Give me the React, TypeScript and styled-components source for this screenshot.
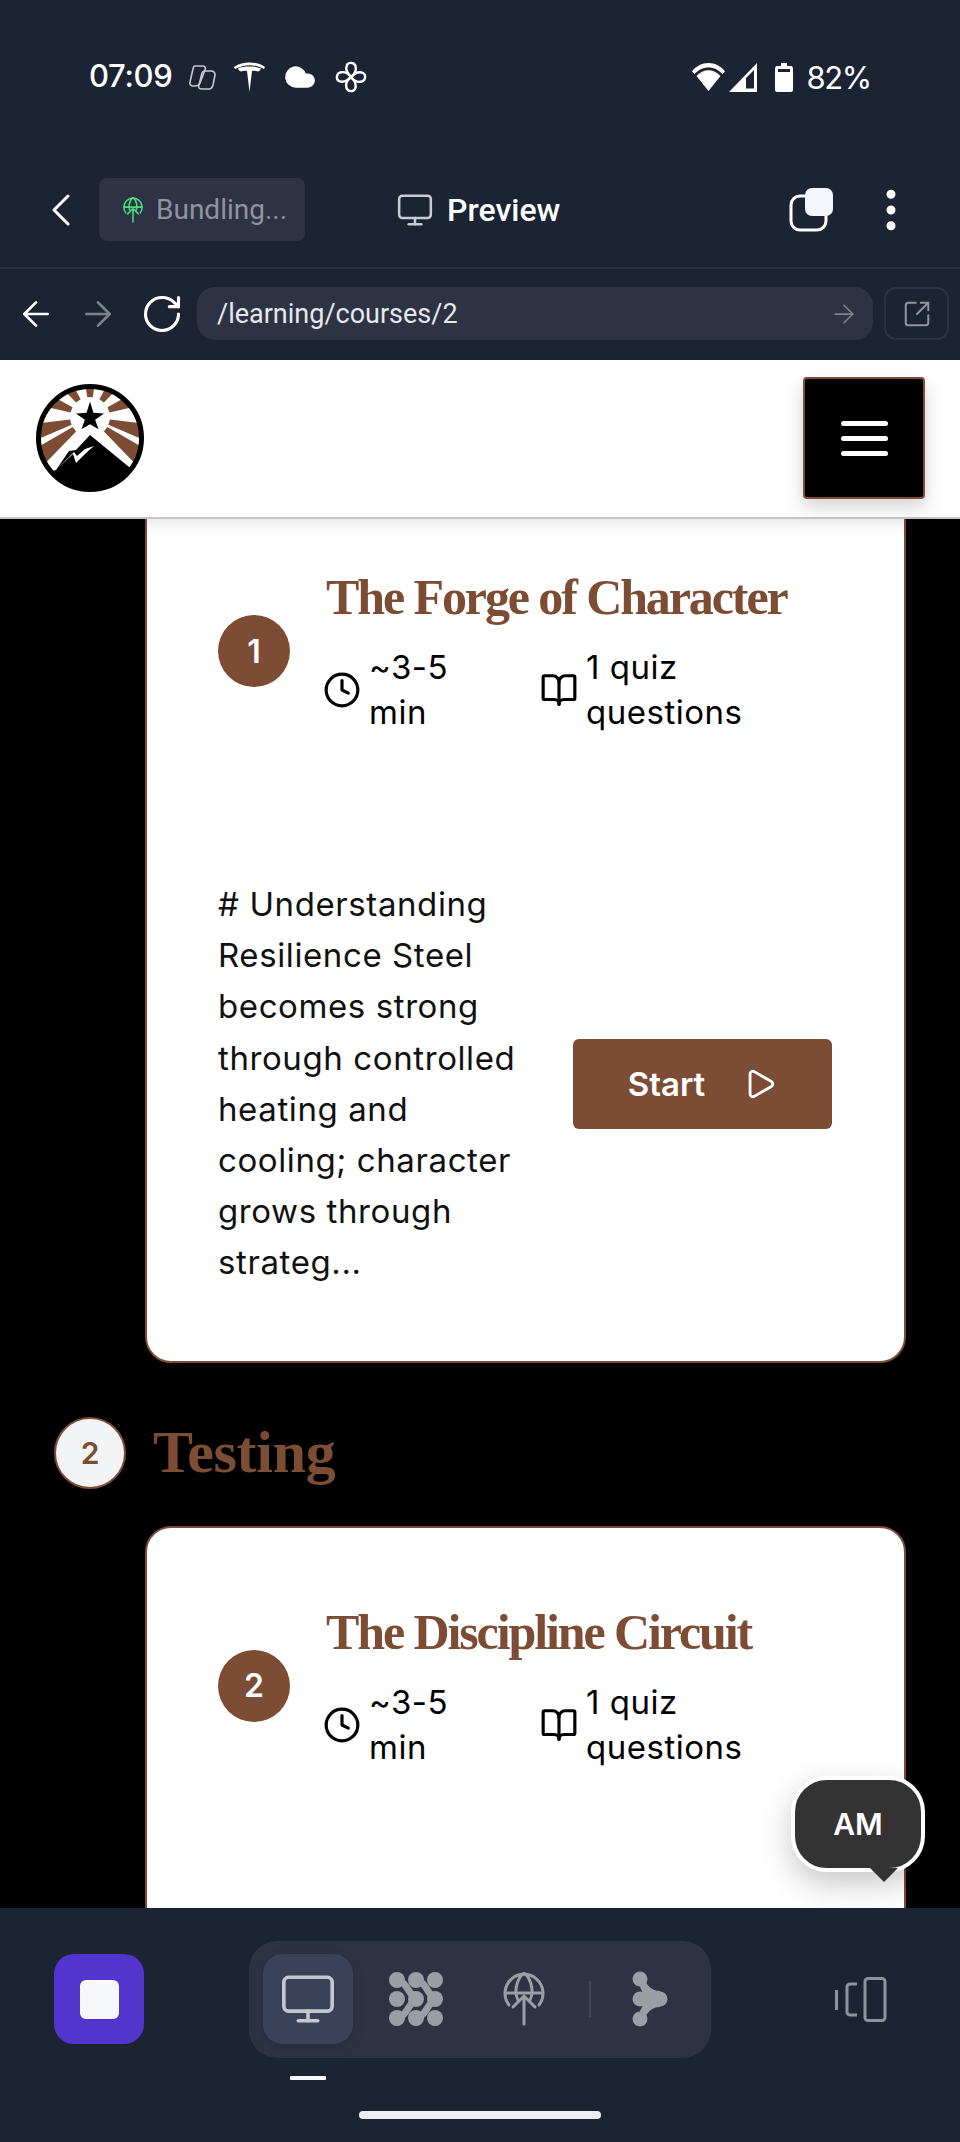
import React from 'react';
import styled, { createGlobalStyle } from 'styled-components';
import {
  ArrowLeft,
  ArrowRight,
  BookOpen,
  ChevronLeft,
  Clock,
  Cloud,
  EllipsisVertical,
  Monitor,
  Play,
  RotateCw,
  SquareArrowOutUpRight,
} from 'lucide-react';

const BROWN = '#7c4c35';
const CHROME = '#1c2333';
const CHROME_LIGHT = '#2d3245';
const UI_FONT = '"Roboto", "Open Sans", sans-serif';
const BODY_FONT = '"Inter", "Open Sans", sans-serif';
const DISPLAY_FONT = '"Liberation Serif", serif';

const GlobalStyle = createGlobalStyle`
  html, body {
    margin: 0;
    padding: 0;
    background: #000;
  }
`;

const Screen = styled.div`
  position: relative;
  width: 960px;
  height: 2142px;
  display: flex;
  flex-direction: column;
  overflow: hidden;
  background: #000;
`;

const TopChrome = styled.div`
  height: 360px;
  flex: none;
  background: ${CHROME};
  display: flex;
  flex-direction: column;
`;

const StatusBar = styled.div`
  height: 119px;
  padding: 60px 89px 0 89px;
  box-sizing: border-box;
  display: flex;
  align-items: flex-start;
  justify-content: space-between;
  color: #fff;
  font-family: ${BODY_FONT};
  font-size: 31px;
  font-weight: 500;
`;

const StatusGroup = styled.div`
  height: 34px;
  display: flex;
  align-items: center;
  gap: 18px;
`;

const StatusTime = styled.span`
  margin: -4px -3px 0 0;
  letter-spacing: -0.3px;
`;

const StatusRight = styled(StatusGroup)`
  gap: 4px;
`;

const BatterySlot = styled.span`
  margin-left: 13px;
  line-height: 0;
`;

const BatteryText = styled.span`
  margin-left: 9px;
  font-size: 31px;
  font-weight: 400;
  letter-spacing: -1.3px;
`;

const AppBar = styled.div`
  height: 150px;
  flex: none;
  box-sizing: border-box;
  padding: 60px 42px 27px 33px;
  border-bottom: 2px solid #2a3042;
  display: flex;
  align-items: center;
  color: #fff;
`;

const BundlePill = styled.div`
  width: 206px;
  height: 63px;
  margin-left: 10px;
  padding-left: 21px;
  box-sizing: border-box;
  border-radius: 8px;
  background: ${CHROME_LIGHT};
  display: flex;
  align-items: center;
  gap: 10px;
  color: #8f949f;
  font-family: ${UI_FONT};
  font-size: 28px;
`;

const PreviewTitle = styled.div`
  margin-left: 91px;
  display: flex;
  align-items: center;
  gap: 13px;
  font-family: ${UI_FONT};
  font-size: 32px;
  font-weight: 500;
  color: #c8cbd1;

  span {
    color: #fff;
  }
`;

const AppBarActions = styled.div`
  margin-left: auto;
  display: flex;
  align-items: center;
  gap: 31px;
`;

const UrlRow = styled.div`
  flex: 1;
  padding: 18px 11px 20px 16px;
  display: flex;
  align-items: stretch;
  gap: 11px;
`;

const UrlNav = styled.div`
  margin-right: 2px;
  display: flex;
  align-items: center;
  gap: 22px;
  color: #fff;
`;

const UrlField = styled.div`
  flex: 1;
  border-radius: 18px;
  background: ${CHROME_LIGHT};
  padding: 0 14px 0 20px;
  display: flex;
  align-items: center;
  justify-content: space-between;
  color: #e6e8ec;
  font-family: ${UI_FONT};
  font-size: 27px;
`;

const OpenButton = styled.div`
  width: 65px;
  box-sizing: border-box;
  border: 2px solid ${CHROME_LIGHT};
  border-radius: 12px;
  display: flex;
  align-items: center;
  justify-content: center;
  color: #9095a0;
`;

const SiteHeader = styled.header`
  position: relative;
  z-index: 2;
  height: 159px;
  flex: none;
  box-sizing: border-box;
  padding: 18px 35px 19px 36px;
  background: #fff;
  border-bottom: 2px solid #c4c4c4;
  box-shadow: 0 4px 14px rgba(0, 0, 0, 0.1);
  display: flex;
  align-items: center;
  justify-content: space-between;
`;

const MenuButton = styled.div`
  width: 122px;
  height: 122px;
  box-sizing: border-box;
  border: 2px solid ${BROWN};
  border-radius: 4px;
  background: #000;
  box-shadow: 0 8px 18px rgba(0, 0, 0, 0.18);
  display: flex;
  flex-direction: column;
  align-items: center;
  justify-content: center;
  gap: 10px;
`;

const MenuLine = styled.i`
  display: block;
  width: 47px;
  height: 5px;
  border-radius: 3px;
  background: #fff;
`;

const Content = styled.main`
  flex: 1;
  min-height: 0;
  overflow: hidden;
  background: #000;
`;

const Card = styled.section<{ $clipped?: boolean }>`
  width: 761px;
  min-height: 500px;
  box-sizing: border-box;
  margin: ${({ $clipped }) => ($clipped ? '-28px' : '0')} 0 0 145px;
  padding: 74px 50px 72px 71px;
  background: #fff;
  border: 2px solid ${BROWN};
  border-radius: 26px;
`;

const LessonHead = styled.div`
  display: flex;
  align-items: center;
  gap: 36px;
`;

const LessonNumber = styled.div`
  width: 72px;
  height: 72px;
  flex: none;
  border-radius: 50%;
  background: ${BROWN};
  color: #fff;
  display: flex;
  align-items: center;
  justify-content: center;
  font-family: ${BODY_FONT};
  font-size: 32px;
  font-weight: 600;
`;

const LessonInfo = styled.div`
  min-width: 0;
  flex: 1;
`;

const LessonTitle = styled.h3`
  margin: 0 0 18px;
  height: 60px;
  line-height: 60px;
  font-family: ${DISPLAY_FONT};
  font-size: 50px;
  font-weight: 700;
  letter-spacing: -2.1px;
  white-space: nowrap;
  color: ${BROWN};
`;

const MetaRow = styled.div`
  display: flex;
  margin-left: -3px;
`;

const MetaItem = styled.div`
  width: 217px;
  display: flex;
  align-items: center;
  gap: 8px;
  color: #000;
`;

const MetaText = styled.div<{ $width: number }>`
  width: ${({ $width }) => $width}px;
  font-family: ${BODY_FONT};
  font-size: 33px;
  line-height: 45px;
  letter-spacing: 0.5px;
  color: #000;
`;

const LessonBody = styled.div`
  margin-top: 144px;
  display: flex;
  align-items: center;
  gap: 47px;
`;

const Excerpt = styled.p`
  width: 308px;
  flex: none;
  margin: 0;
  font-family: ${BODY_FONT};
  font-size: 33px;
  line-height: 51.2px;
  letter-spacing: 0.6px;
  color: #111;
`;

const StartButton = styled.div`
  width: 259px;
  height: 90px;
  border-radius: 6px;
  background: ${BROWN};
  color: #fff;
  display: flex;
  align-items: center;
  justify-content: center;
  gap: 38px;
  font-family: ${BODY_FONT};
  font-size: 33px;
  font-weight: 600;
`;

const SectionHead = styled.div`
  height: 163px;
  padding: 17px 0 0 54px;
  box-sizing: border-box;
  display: flex;
  align-items: center;
  gap: 27px;
`;

const SectionNumber = styled.div`
  width: 72px;
  height: 72px;
  box-sizing: border-box;
  border: 2px solid ${BROWN};
  border-radius: 50%;
  background: #f3f4f6;
  color: ${BROWN};
  display: flex;
  align-items: center;
  justify-content: center;
  font-family: ${BODY_FONT};
  font-size: 30px;
  font-weight: 600;
`;

const SectionTitle = styled.h2`
  margin: 0;
  font-family: ${DISPLAY_FONT};
  font-size: 60px;
  font-weight: 700;
  letter-spacing: -0.3px;
  color: ${BROWN};
`;

const AccountBubble = styled.div`
  position: absolute;
  z-index: 3;
  left: 791px;
  top: 1776px;
  width: 134px;
  height: 96px;
  box-sizing: border-box;
  border: 4px solid #fff;
  border-radius: 36px;
  background: #333;
  box-shadow: 0 12px 30px rgba(0, 0, 0, 0.22);
  color: #fff;
  display: flex;
  align-items: center;
  justify-content: center;
  font-family: ${BODY_FONT};
  font-size: 30px;
  font-weight: 600;

  &::after {
    content: '';
    position: absolute;
    left: 75px;
    top: 88px;
    border-left: 14px solid transparent;
    border-right: 14px solid transparent;
    border-top: 14px solid #333;
  }
`;

const BottomBar = styled.footer`
  position: relative;
  z-index: 4;
  height: 234px;
  flex: none;
  box-sizing: border-box;
  padding: 33px 54px 0 54px;
  background: ${CHROME};
  display: grid;
  grid-template-columns: 1fr auto 1fr;
  align-items: start;
`;

const StopButton = styled.div`
  width: 90px;
  height: 90px;
  margin-top: 13px;
  border-radius: 20px;
  background: #5235cc;
  display: flex;
  align-items: center;
  justify-content: center;

  &::before {
    content: '';
    width: 39px;
    height: 39px;
    border-radius: 6px;
    background: #f6f8fc;
  }
`;

const NavColumn = styled.div`
  display: flex;
  flex-direction: column;
  align-items: flex-start;
`;

const NavPill = styled.nav`
  width: 462px;
  height: 117px;
  box-sizing: border-box;
  padding: 13px 0 0 14px;
  border-radius: 28px;
  background: ${CHROME_LIGHT};
  display: flex;
  align-items: flex-start;
  gap: 18px;
  color: #9a9fa6;
`;

const NavItem = styled.div<{ $active?: boolean }>`
  width: 90px;
  height: 90px;
  flex: none;
  border-radius: 20px;
  background: ${({ $active }) => ($active ? '#3a4259' : 'transparent')};
  box-shadow: ${({ $active }) => ($active ? '0 4px 14px rgba(0, 0, 0, 0.12)' : 'none')};
  color: ${({ $active }) => ($active ? '#c4c7cd' : 'inherit')};
  display: flex;
  align-items: center;
  justify-content: center;
`;

const NavDivider = styled.div`
  width: 2px;
  height: 36px;
  margin: 27px -4px 0 2px;
  flex: none;
  background: #3f465b;
`;

const NavIndicator = styled.div`
  width: 36px;
  height: 4px;
  margin: 18px 0 0 41px;
  border-radius: 1px;
  background: #f6f8fc;
`;

const DeviceToggle = styled.div`
  justify-self: end;
  margin: 36px 19px 0 0;
  line-height: 0;
`;

const HomeBar = styled.div`
  position: absolute;
  left: 359px;
  top: 203px;
  width: 242px;
  height: 8px;
  border-radius: 4px;
  background: #eceef1;
`;

const rayPoint = (angle: number, radius: number) => {
  const a = (angle * Math.PI) / 180;
  return `${(54 + Math.sin(a) * radius).toFixed(1)},${(33 - Math.cos(a) * radius).toFixed(1)}`;
};

const RAY_ANGLES = [0, 36, -36, 69, -69, 105, -105, 128, -128];

const Logo = () => (
  <svg width="108" height="108" viewBox="0 0 108 108">
    <defs>
      <clipPath id="logo-clip">
        <circle cx="54" cy="54" r="51" />
      </clipPath>
    </defs>
    <circle cx="54" cy="54" r="51" fill="#fff" />
    <g clipPath="url(#logo-clip)">
      {RAY_ANGLES.map((angle) => (
        <polygon
          key={angle}
          fill={BROWN}
          points={`${rayPoint(angle - 8, 20)} ${rayPoint(angle - 8, 90)} ${rayPoint(angle + 8, 90)} ${rayPoint(angle + 8, 20)}`}
        />
      ))}
      <polygon fill="#fff" points="54,43 102,90 6,90" />
      <polygon fill="#000" points="54,51 104,92 104,110 0,110 0,92 20,86 33,67 40,66" />
      <polygon fill="#fff" points="20,86 37,70 40,79 50,69 58,62 49,65 41,72 38,68" />
    </g>
    <polygon
      fill="#000"
      stroke="#fff"
      strokeWidth="1.5"
      points="54,15 58,28 70,29 60,36 64,47 54,41 44,47 48,36 38,29 50,28"
    />
    <circle cx="54" cy="54" r="51.500" fill="none" stroke="#000" strokeWidth="5" />
  </svg>
);

const CopilotIcon = () => (
  <svg width="28" height="28" viewBox="0 0 28 28" fill="none" stroke="#c7cad0" strokeWidth="1.6">
    <path d="M7 3h8c2 0 3 2 2 4l-5 13c-1 2-3 3-5 3H5c-2 0-4-2-3-4l3-13c.4-2 1-3 2-3z" />
    <path d="M16 8h7c3 0 4 2 4 4l-2 10c-.6 2-2 4-4 4h-8c-2 0-3-2-2-4l3-12c.4-1 1-2 2-2z" />
  </svg>
);

const TeslaIcon = () => (
  <svg width="31" height="30" viewBox="0 0 31 30" fill="#fff">
    <path d="M0 5C5 1.500 10 .5 15.500 .5S26 1.500 31 5l-1 2C25 4.500 20 3.200 15.500 3.200S6 4.500 1 7z" />
    <path d="M4 6.500C7 5 11 4.500 15.500 4.500S24 5 27 6.500C26.500 8 25.500 9 24 9.500 22 8.500 20 8.500 18 9L15.500 30 13 9C11 8.500 9 8.500 7 9.500 5.500 9 4.500 8 4 6.500z" />
  </svg>
);

const PinwheelIcon = () => (
  <svg width="32" height="32" viewBox="0 0 32 32" fill="none" stroke="#fff" strokeWidth="2.4" strokeLinejoin="round">
    {[0, 90, 180, 270].map((turn) => (
      <path key={turn} transform={`rotate(${turn} 16 16)`} d="M16 16C12 12 10 8 12 4c1.500-3 7-3 8.500 1 1 3.500-.5 8-4.500 11z" />
    ))}
  </svg>
);

const WifiIcon = () => (
  <svg width="33" height="28" viewBox="0 0 33 28" fill="#fff">
    <path d="M0 8.500C4 3 10 0 16.500 0S29 3 33 8.500l-2.500 2.800C27 7 22 4.500 16.500 4.500S6 7 2.500 11.300z" />
    <path d="M4.500 13C8 9 12 7.200 16.500 7.200S25 9 28.500 13L16.500 28z" />
  </svg>
);

const SignalIcon = () => (
  <svg width="29" height="29" viewBox="0 0 29 29" fill="#fff">
    <path fillRule="evenodd" d="M28 0v29H0zM25 7l-8 8v10.500h8z" />
  </svg>
);

const BatteryIcon = () => (
  <svg width="18" height="29" viewBox="0 0 18 29" fill="#fff">
    <path d="M6 0h6v3h4c1 0 2 1 2 2v22c0 1-1 2-2 2H2c-1 0-2-1-2-2V5c0-1 1-2 2-2h4z" />
    <rect x="3" y="6" width="12" height="3" fill="#1c2333" />
  </svg>
);

const GlobeArrow: React.FC<{ size: number; color?: string; weight?: number }> = ({ size, color = 'currentColor', weight = 2 }) => (
  <svg width={size} height={size} viewBox="0 0 40 54" fill="none" stroke={color} strokeWidth={weight} strokeLinecap="round">
    <path d="M5 33a19 19 0 1 1 30 0" />
    <path d="M20 1c-8 6-10 20-6 27M20 1c8 6 10 20 6 27M2 21h36" />
    <path d="M20 52V24M9 35l11-11 11 11" />
  </svg>
);

const CopyIcon = () => (
  <svg width="44" height="44" viewBox="0 0 44 44">
    <rect x="2" y="8" width="35" height="34" rx="9" fill="none" stroke="#fff" strokeWidth="3" />
    <rect x="16" y="0" width="28" height="28" rx="7" fill="#f3f6fb" />
  </svg>
);

const DotsCluster = () => (
  <svg width="56" height="56" viewBox="0 0 56 56" fill="#9a9fa6" stroke="#9a9fa6">
    <path d="M9 9c10 2 10 12 19 19-9 7-9 17-19 19" fill="none" strokeWidth="7" />
    <path d="M28 9c10 2 10 12 19 19-9 7-9 17-19 19" fill="none" strokeWidth="7" />
    {[9, 28, 47].map((cy) =>
      [9, 28, 47].map((cx) => <circle key={`${cx}-${cy}`} cx={cx} cy={cy} r="8" stroke="none" />)
    )}
  </svg>
);

const NodesIcon = () => (
  <svg width="36" height="56" viewBox="0 0 36 56" fill="#9a9fa6">
    <path d="M10 2c3 10 8 18 18 18v16c-10 0-15 8-18 18l-2-14 6-12-6-12z" />
    <circle cx="8" cy="8" r="7.500" />
    <circle cx="8" cy="28" r="7.500" />
    <circle cx="8" cy="48" r="7.500" />
    <circle cx="28" cy="28" r="7.500" />
  </svg>
);

const RotateDevice = () => (
  <svg width="52" height="45" viewBox="0 0 52 45" fill="none" stroke="#8d939c" strokeWidth="3">
    <path d="M1.500 13v20" />
    <path d="M22 7h-7a3 3 0 0 0-3 3v25a3 3 0 0 0 3 3h7" />
    <rect x="30" y="1.500" width="20" height="42" rx="3" />
  </svg>
);

interface LessonProps {
  index: number;
  title: string;
  clipped?: boolean;
  children?: React.ReactNode;
}

const Lesson: React.FC<LessonProps> = ({ index, title, clipped, children }) => (
  <Card $clipped={clipped}>
    <LessonHead>
      <LessonNumber>{index}</LessonNumber>
      <LessonInfo>
        <LessonTitle>{title}</LessonTitle>
        <MetaRow>
          <MetaItem>
            <Clock size={38} strokeWidth={2} />
            <MetaText $width={120}>~3-5 min</MetaText>
          </MetaItem>
          <MetaItem>
            <BookOpen size={38} strokeWidth={2} />
            <MetaText $width={170}>1 quiz questions</MetaText>
          </MetaItem>
        </MetaRow>
      </LessonInfo>
    </LessonHead>
    {children}
  </Card>
);

export default function App() {
  return (
    <Screen>
      <GlobalStyle />
      <TopChrome>
        <StatusBar>
          <StatusGroup>
            <StatusTime>07:09</StatusTime>
            <CopilotIcon />
            <TeslaIcon />
            <Cloud size={34} fill="#fff" strokeWidth={1} />
            <PinwheelIcon />
          </StatusGroup>
          <StatusRight>
            <WifiIcon />
            <SignalIcon />
            <BatterySlot>
              <BatteryIcon />
            </BatterySlot>
            <BatteryText>82%</BatteryText>
          </StatusRight>
        </StatusBar>
        <AppBar>
          <ChevronLeft size={56} strokeWidth={1.3} />
          <BundlePill>
            <GlobeArrow size={26} color="#4ade80" weight={3.2} />
            Bundling...
          </BundlePill>
          <PreviewTitle>
            <Monitor size={38} strokeWidth={1.6} />
            <span>Preview</span>
          </PreviewTitle>
          <AppBarActions>
            <CopyIcon />
            <EllipsisVertical size={54} strokeWidth={2} />
          </AppBarActions>
        </AppBar>
        <UrlRow>
          <UrlNav>
            <ArrowLeft size={40} strokeWidth={1.6} />
            <ArrowRight size={40} strokeWidth={1.6} color="#7d828c" />
            <RotateCw size={44} strokeWidth={1.7} />
          </UrlNav>
          <UrlField>
            /learning/courses/2
            <ArrowRight size={30} strokeWidth={1.4} color="#7d828c" />
          </UrlField>
          <OpenButton>
            <SquareArrowOutUpRight size={30} strokeWidth={1.6} />
          </OpenButton>
        </UrlRow>
      </TopChrome>

      <SiteHeader>
        <Logo />
        <MenuButton>
          <MenuLine />
          <MenuLine />
          <MenuLine />
        </MenuButton>
      </SiteHeader>

      <Content>
        <Lesson index={1} title="The Forge of Character" clipped>
          <LessonBody>
            <Excerpt>
              # Understanding Resilience Steel becomes strong through controlled heating and cooling; character grows through strateg...
            </Excerpt>
            <StartButton>
              Start
              <Play size={34} strokeWidth={2} />
            </StartButton>
          </LessonBody>
        </Lesson>
        <SectionHead>
          <SectionNumber>2</SectionNumber>
          <SectionTitle>Testing</SectionTitle>
        </SectionHead>
        <Lesson index={2} title="The Discipline Circuit" />
      </Content>

      <AccountBubble>AM</AccountBubble>

      <BottomBar>
        <StopButton />
        <NavColumn>
          <NavPill>
            <NavItem $active>
              <Monitor size={58} strokeWidth={1.5} />
            </NavItem>
            <NavItem>
              <DotsCluster />
            </NavItem>
            <NavItem>
              <GlobeArrow size={54} weight={3} />
            </NavItem>
            <NavDivider />
            <NavItem>
              <NodesIcon />
            </NavItem>
          </NavPill>
          <NavIndicator />
        </NavColumn>
        <DeviceToggle>
          <RotateDevice />
        </DeviceToggle>
        <HomeBar />
      </BottomBar>
    </Screen>
  );
}
